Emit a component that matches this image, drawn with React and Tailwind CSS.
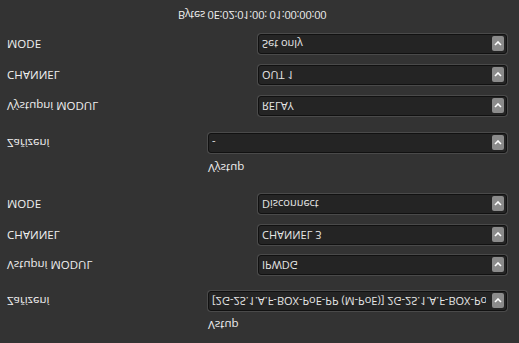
const VSTUP = [
  { label: 'Zařízení', value: '[2G-2S.1.A.F-BOX-PoE-PP (M-PoE)] 2G-2S.1.A.F-BOX-PoE-PP (M-PoE)', wide: true, mt: 'mt-[7px]' },
  { label: 'Vstupní MODUL', value: 'IPWDG', mt: 'mt-[16px]' },
  { label: 'CHANNEL', value: 'CHANNEL 3', mt: 'mt-[10px]' },
  { label: 'MODE', value: 'Disconnect', mt: 'mt-[11px]' },
]

const VYSTUP = [
  { label: 'Zařízení', value: '-', wide: true, mt: 'mt-[8px]' },
  { label: 'Výstupní MODUL', value: 'RELAY', mt: 'mt-[17px]' },
  { label: 'CHANNEL', value: 'OUT 1', mt: 'mt-[11px]' },
  { label: 'MODE', value: 'Set only', mt: 'mt-[11px]' },
]

function Select({ value, wide }) {
  return (
    <div className={`${wide ? 'w-[299px]' : 'w-[249px]'} h-[20px] flex items-center rounded-[3px] border border-[#111] bg-[#242424] shadow-[0_0_0_1px_#4a4a4a] pl-[3px] pr-[2px]`}>
      <span className="flex-1 overflow-hidden whitespace-nowrap text-[#e6e6e6]">{value}</span>
      <span className="w-[12px] h-[15px] rounded-[2px] bg-[#8b8b8b] flex items-center justify-center ml-[6px]">
        <svg width="8" height="5" viewBox="0 0 8 5">
          <path d="M1 1 L4 4 L7 1" stroke="#fff" strokeWidth="1.6" fill="none" />
        </svg>
      </span>
    </div>
  )
}

function Row({ row }) {
  return (
    <div className={`${row.mt} flex items-center`}>
      <div className={`${row.wide ? 'w-[208px]' : 'w-[258px]'} pl-[7px] text-[11.5px] text-[#f0f0f0]`}>{row.label}</div>
      <Select value={row.value} wide={row.wide} />
    </div>
  )
}

export default function App() {
  return (
    <div className="w-[519px] h-[343px] overflow-hidden bg-[#333333] text-[11px] leading-[14px] -scale-y-100"
      style={{ fontFamily: '"Open Sans", "DejaVu Sans", sans-serif' }}>
      <div className="pt-[11px]">
        <div className="pl-[208px] h-[14px] text-[11.5px] text-[#f0f0f0]">Vstup</div>
        {VSTUP.map((r, i) => <Row key={i} row={r} />)}
        <div className="mt-[19px] pl-[208px] h-[14px] text-[11.5px] text-[#f0f0f0]">Výstup</div>
        {VYSTUP.map((r, i) => <Row key={i} row={r} />)}
        <div className="mt-[12px] pl-[178px] h-[14px] tracking-[-0.2px] text-[#f0f0f0]">Bytes 0E:02:01:00: 01:00:00:00</div>
      </div>
    </div>
  )
}
